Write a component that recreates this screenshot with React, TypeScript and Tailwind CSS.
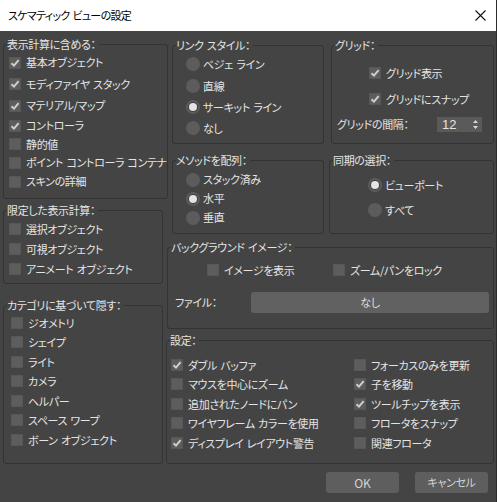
import React from "react";

type Row = { label: string; checked?: boolean };

// the dialog font puts a slightly wider gap between words than a plain space
const sp = (s: string) => s.replace(/ /g, "\u2004");

function Box({ checked }: { checked?: boolean }) {
  return (
    <span className="w-[12px] h-[12px] shrink-0 bg-[#5d5d5d] border border-[#575757] flex items-center justify-center">
      {checked && (
        <svg width="10" height="10" viewBox="0 0 10 10">
          <polyline points="1.5,5.2 4,7.6 8.6,2.2" fill="none" stroke="#cfcfcf" strokeWidth="2" />
        </svg>
      )}
    </span>
  );
}

function Check({ label, checked, className = "" }: Row & { className?: string }) {
  return (
    <div className={`flex items-center gap-[5px] ${className}`}>
      <Box checked={checked} />
      <span className="whitespace-nowrap">{sp(label)}</span>
    </div>
  );
}

function Radio({ label, selected, className = "" }: { label: string; selected?: boolean; className?: string }) {
  return (
    <div className={`flex items-center gap-[3px] ${className}`}>
      <span className="w-[14px] h-[14px] shrink-0 rounded-full bg-[#5c5c5c] flex items-center justify-center">
        {selected && <span className="w-[8px] h-[8px] rounded-full bg-[#e4e4e4] ring-1 ring-[#3e3e3e]" />}
      </span>
      <span className="whitespace-nowrap">{sp(label)}</span>
    </div>
  );
}

function Group({ legend, className = "", children }: { legend: string; className?: string; children?: React.ReactNode }) {
  return (
    <fieldset className={`border border-[#333333] rounded-[3px] shrink-0 ${className}`}>
      <legend className="ml-[3px] pr-[3px] leading-[16px]">{sp(legend)}</legend>
      {children}
    </fieldset>
  );
}

const include: Row[] = [
  { label: "基本オブジェクト", checked: true },
  { label: "モディファイヤ スタック", checked: true },
  { label: "マテリアル/マップ", checked: true },
  { label: "コントローラ", checked: true },
  { label: "静的値" },
  { label: "ポイント コントローラ コンテナ" },
  { label: "スキンの詳細" },
];
const includeH = ["h-[21px]", "h-[22px]", "h-[21px]", "h-[19px]", "h-[18px]", "h-[19px]", "h-[19px]"];

const limited: Row[] = [{ label: "選択オブジェクト" }, { label: "可視オブジェクト" }, { label: "アニメート オブジェクト" }];

const hide: Row[] = [
  { label: "ジオメトリ" },
  { label: "シェイプ" },
  { label: "ライト" },
  { label: "カメラ" },
  { label: "ヘルパー" },
  { label: "スペース ワープ" },
  { label: "ボーン オブジェクト" },
];

const settingsLeft: Row[] = [
  { label: "ダブル バッファ", checked: true },
  { label: "マウスを中心にズーム" },
  { label: "追加されたノードにパン" },
  { label: "ワイヤフレーム カラーを使用" },
  { label: "ディスプレイ レイアウト警告", checked: true },
];
const settingsRight: Row[] = [
  { label: "フォーカスのみを更新" },
  { label: "子を移動", checked: true },
  { label: "ツールチップを表示", checked: true },
  { label: "フロータをスナップ" },
  { label: "関連フロータ" },
];

export default function App() {
  return (
    <div className="w-[497px] h-[502px] bg-[#444444] overflow-hidden border-r border-[#2c2c2c] text-[11px] tracking-[-0.35px] text-[#e4e4e4] font-['Noto_Sans_CJK_JP','Noto_Sans',sans-serif] [font-feature-settings:'palt']">
      {/* title bar */}
      <div className="h-[31px] bg-white flex items-center justify-between pl-[8px] pr-[10px] text-black">
        <span className="text-[11px] tracking-[-0.7px]">{sp("スケマティック ビューの設定")}</span>
        <svg width="11" height="11" viewBox="0 0 11 11">
          <path d="M0.5 0.5 L10.5 10.5 M10.5 0.5 L0.5 10.5" stroke="#111" strokeWidth="1.1" />
        </svg>
      </div>

      <div className="flex">
        {/* left column */}
        <div className="w-[166px] shrink-0 pl-[3px] flex flex-col">
          <Group legend="表示計算に含める：" className="mt-[5px] w-[165px] h-[163px]">
            <div className="pl-[5px]">
              {include.map((r, i) => (
                <Check key={r.label} {...r} className={includeH[i]} />
              ))}
            </div>
          </Group>
          <Group legend="限定した表示計算：" className="mt-[3px] w-[160px] h-[82px]">
            <div className="pl-[5px] pt-[1px]">
              {limited.map((r) => (
                <Check key={r.label} {...r} className="h-[20px]" />
              ))}
            </div>
          </Group>
          <Group legend="カテゴリに基づいて隠す：" className="mt-[13px] w-[160px] h-[167px]">
            <div className="pl-[7px]">
              {hide.map((r) => (
                <Check key={r.label} {...r} className="h-[19.5px]" />
              ))}
            </div>
          </Group>
        </div>

        {/* right area */}
        <div className="w-[328px] shrink-0 flex flex-col">
          <div className="flex mt-[6px]">
            <Group legend="リンク スタイル：" className="ml-[6px] w-[152px] h-[107px]">
              <div className="pl-[13px]">
                <Radio label="ベジェ ライン" className="h-[22px]" />
                <Radio label="直線" className="h-[21.5px]" />
                <Radio label="サーキット ライン" selected className="h-[21.5px]" />
                <Radio label="なし" className="h-[20px]" />
              </div>
            </Group>
            <Group legend="グリッド：" className="ml-[7px] w-[163px] h-[107px]">
              <div className="pt-[10px]">
                <Check label="グリッド表示" checked className="h-[20px] pl-[37px] gap-[4px]" />
                <Check label="グリッドにスナップ" checked className="h-[20px] mt-[6px] pl-[37px] gap-[4px]" />
                <div className="h-[20px] mt-[5px] pl-[5px] flex items-center">
                  <span className="w-[100px]">グリッドの間隔：</span>
                  <div className="w-[45px] h-[15px] bg-[#5a5a5a] flex items-center justify-between pl-[5px] pr-[4px]">
                    <span className="text-[13px] tracking-normal leading-none font-['Liberation_Sans',sans-serif]">12</span>
                    <svg width="5" height="9" viewBox="0 0 5 9">
                      <path d="M2.5 0 L5 3 L0 3 Z M2.5 9 L5 6 L0 6 Z" fill="#d8d8d8" />
                    </svg>
                  </div>
                </div>
              </div>
            </Group>
          </div>

          <div className="flex mt-[8px]">
            <Group legend="メソッドを配列：" className="ml-[6px] w-[152px] h-[82px]">
              <div className="pl-[13px] pt-[2px]">
                <Radio label="スタック済み" className="h-[19px]" />
                <Radio label="水平" selected className="h-[19px]" />
                <Radio label="垂直" className="h-[19px]" />
              </div>
            </Group>
            <Group legend="同期の選択：" className="ml-[5px] w-[165px] h-[82px]">
              <div className="pl-[38px] pt-[7px]">
                <Radio label="ビューポート" selected className="h-[20px]" />
                <Radio label="すべて" className="h-[20px] mt-[5px]" />
              </div>
            </Group>
          </div>

          <Group legend="バックグラウンド イメージ：" className="mt-[5px] ml-[1px] w-[327px] h-[90px]">
            <div className="pt-[5px] pl-[39px] flex">
              <Check label="イメージを表示" className="h-[20px] w-[126px] gap-[4px]" />
              <Check label="ズーム/パンをロック" className="h-[20px] gap-[4px]" />
            </div>
            <div className="mt-[12px] pl-[7px] flex items-center">
              <span className="w-[76px]">ファイル：</span>
              <button className="w-[238px] h-[21px] rounded-[3px] bg-[#616161] text-[#dedede]">なし</button>
            </div>
          </Group>

          <Group legend="設定：" className="mt-[3px] w-[328px] h-[132px]">
            <div className="flex pt-[7px] pl-[4px]">
              <div className="w-[183px]">
                {settingsLeft.map((r) => (
                  <Check key={r.label} {...r} className="h-[19.5px]" />
                ))}
              </div>
              <div>
                {settingsRight.map((r) => (
                  <Check key={r.label} {...r} className="h-[19.5px]" />
                ))}
              </div>
            </div>
          </Group>

          <div className="mt-[8px] flex justify-end gap-[16px] pr-[6px]">
            <button className="w-[73px] h-[21px] rounded-[3px] bg-[#5e5e5e] text-[#d4d4d4] text-[12px] tracking-normal">OK</button>
            <button className="w-[73px] h-[21px] rounded-[3px] bg-[#5e5e5e] text-[#d4d4d4]">キャンセル</button>
          </div>
        </div>
      </div>
    </div>
  );
}
